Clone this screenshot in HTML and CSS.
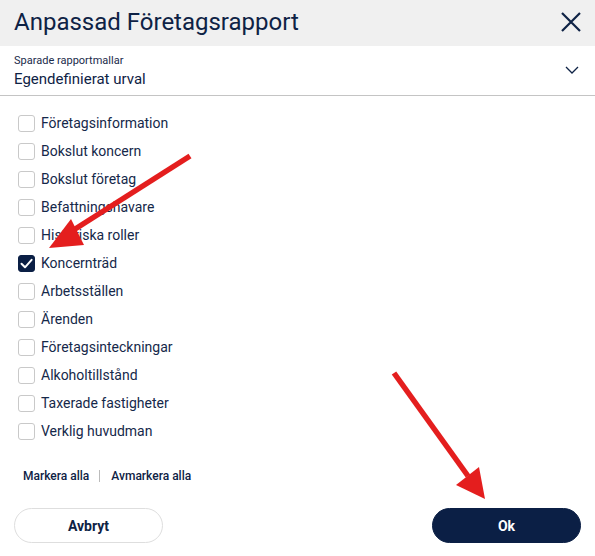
FILE: index.html
```html
<!DOCTYPE html>
<html lang="sv">
<head>
<meta charset="utf-8">
<title>Anpassad Företagsrapport</title>
<link rel="stylesheet" href="styles.css">
</head>
<body>
<div class="dialog">
  <header class="head">
    <h1 class="title">Anpassad Företagsrapport</h1>
    <svg class="close" width="22" height="22" viewBox="0 0 22 22"><path d="M2 2 L20 20 M20 2 L2 20" stroke="#0e2245" stroke-width="2.2" fill="none"/></svg>
  </header>
  <div class="select">
    <div class="select-text">
      <div class="select-label">Sparade rapportmallar</div>
      <div class="select-value">Egendefinierat urval</div>
    </div>
    <svg class="chev" width="14" height="8" viewBox="0 0 14 8"><path d="M1 1 L7 7 L13 1" stroke="#0e2245" stroke-width="1.3" fill="none"/></svg>
  </div>
  <ul class="list">
    <li class="row"><span class="box"></span>Företagsinformation</li>
    <li class="row"><span class="box"></span>Bokslut koncern</li>
    <li class="row"><span class="box"></span>Bokslut företag</li>
    <li class="row"><span class="box"></span>Befattningshavare</li>
    <li class="row"><span class="box"></span>Historiska roller</li>
    <li class="row"><span class="box checked"><svg width="17" height="17" viewBox="0 0 17 17"><path d="M3.5 8.8 L7 12.3 L13.6 4.8" stroke="#fff" stroke-width="2" fill="none" stroke-linecap="round" stroke-linejoin="round"/></svg></span>Koncernträd</li>
    <li class="row"><span class="box"></span>Arbetsställen</li>
    <li class="row"><span class="box"></span>Ärenden</li>
    <li class="row"><span class="box"></span>Företagsinteckningar</li>
    <li class="row"><span class="box"></span>Alkoholtillstånd</li>
    <li class="row"><span class="box"></span>Taxerade fastigheter</li>
    <li class="row"><span class="box"></span>Verklig huvudman</li>
  </ul>
  <div class="links">
    <span class="link">Markera alla</span>
    <span class="sep"></span>
    <span class="link">Avmarkera alla</span>
  </div>
  <div class="actions">
    <button class="btn btn-secondary">Avbryt</button>
    <button class="btn btn-primary">Ok</button>
  </div>
</div>
<svg class="arrows" width="595" height="556" viewBox="0 0 595 556">
  <line x1="190" y1="156" x2="72" y2="231" stroke="#e41e1e" stroke-width="5.5"/>
  <polygon points="49,248 71,219 84,245" fill="#e41e1e"/>
  <line x1="394" y1="373" x2="468" y2="476" stroke="#e41e1e" stroke-width="5.5"/>
  <polygon points="485,499 456,485 479,467" fill="#e41e1e"/>
</svg>
</body>
</html>
```
FILE: styles.css
```css
* { box-sizing: border-box; }
html, body {
  margin: 0;
  padding: 0;
  background: #fff;
}
body {
  width: 595px;
  height: 556px;
  position: relative;
  overflow: hidden;
  font-family: Roboto, "Noto Sans", Arial, sans-serif;
  color: #0e2245;
}
.dialog {
  width: 595px;
  height: 556px;
  display: flex;
  flex-direction: column;
}
.head {
  height: 46px;
  background: #f0f0f0;
  display: flex;
  align-items: center;
  justify-content: space-between;
  padding: 0 14px 0 14px;
}
.title {
  margin: 0;
  font-size: 24px;
  font-weight: 400;
  color: #0e2245;
  position: relative;
  top: -1px;
}
.close { margin-right: -1px; position: relative; top: -1px; }
.select {
  height: 50px;
  border-bottom: 1px solid #c4c4c4;
  display: flex;
  align-items: center;
  justify-content: space-between;
  padding: 0 16px 0 14px;
}
.select-text { position: relative; top: 1px; }
.select-label {
  font-size: 11px;
  line-height: 13px;
  color: #1a2a4a;
}
.select-value {
  font-size: 15px;
  line-height: 19px;
  margin-top: 3px;
  color: #0e2245;
}
.chev { position: relative; top: -1px; }
.list {
  list-style: none;
  margin: 0;
  padding: 13px 0 0 18px;
}
.row {
  height: 28px;
  display: flex;
  align-items: center;
  font-size: 14px;
  color: #15284a;
}
.box {
  width: 17px;
  height: 17px;
  border: 1px solid #c9c9c9;
  border-radius: 3px;
  margin-right: 6px;
  display: inline-flex;
  background: #fff;
}
.box.checked {
  background: #0b1f45;
  border-color: #0b1f45;
}
.box.checked svg { margin: -1px; }
.links {
  margin-top: 23px;
  height: 16px;
  display: flex;
  align-items: center;
  padding-left: 23px;
  font-size: 12px;
  font-weight: 500;
  color: #0e2245;
}
.sep {
  width: 1px;
  height: 12px;
  background: #bbb;
  margin: 0 11px 0 10px;
}
.actions {
  margin-top: 24px;
  display: flex;
  justify-content: space-between;
  padding: 0 14px;
}
.btn {
  width: 149px;
  height: 35px;
  border-radius: 18px;
  font-family: Roboto, "Noto Sans", Arial, sans-serif;
  font-size: 14px;
  font-weight: 700;
  cursor: pointer;
}
.btn-secondary {
  background: #fff;
  border: 1px solid #dedede;
  color: #0e2245;
}
.btn-primary {
  background: #0b1f45;
  border: 1px solid #0b1f45;
  color: #fff;
}
.arrows {
  position: absolute;
  left: 0;
  top: 0;
  pointer-events: none;
}
```
